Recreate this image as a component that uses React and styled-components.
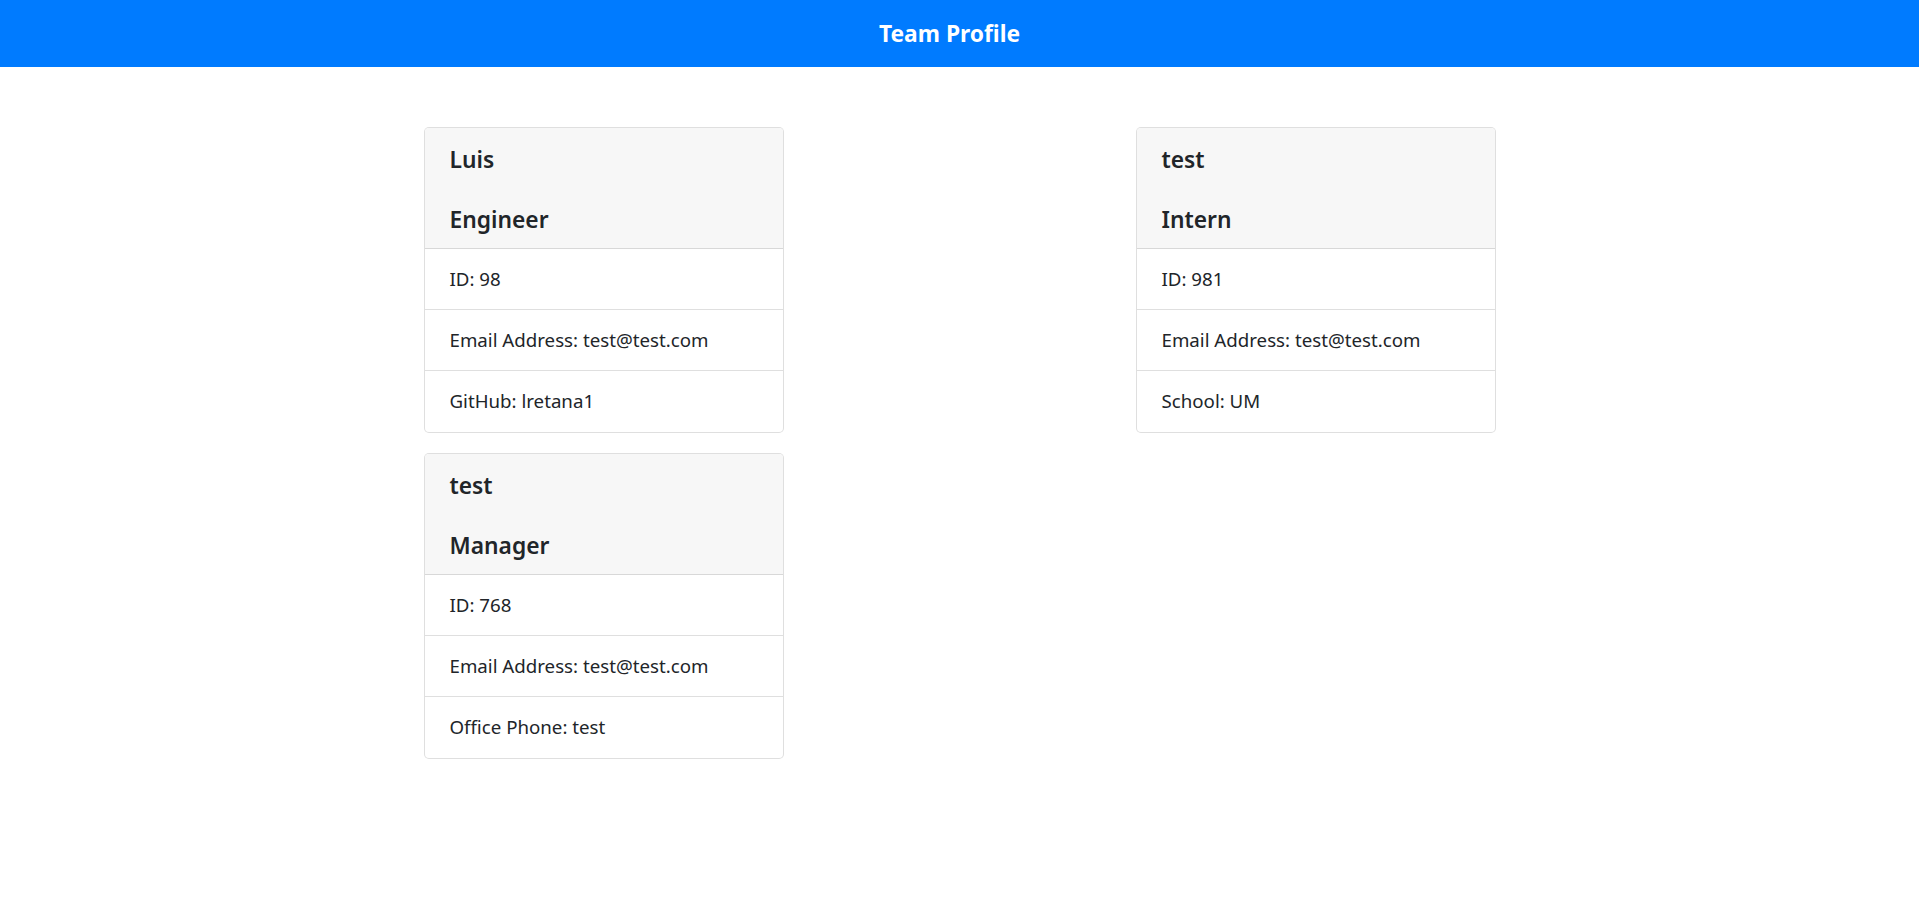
import styled, { createGlobalStyle } from "styled-components";

const team = [
  {
    name: "Luis",
    role: "Engineer",
    id: 98,
    email: "test@test.com",
    extra: "GitHub: lretana1",
  },
  {
    name: "test",
    role: "Manager",
    id: 768,
    email: "test@test.com",
    extra: "Office Phone: test",
  },
  {
    name: "test",
    role: "Intern",
    id: 981,
    email: "test@test.com",
    extra: "School: UM",
  },
];

function EmployeeCard({ member }) {
  return (
    <Card>
      <CardHeader>
        <Name>{member.name}</Name>
        <Role>{member.role}</Role>
      </CardHeader>
      <ListGroup>
        <ListItem>ID: {member.id}</ListItem>
        <ListItem>Email Address: {member.email}</ListItem>
        <ListItem>{member.extra}</ListItem>
      </ListGroup>
    </Card>
  );
}

function App() {
  const left = team.filter((m) => m.role !== "Intern");
  const right = team.filter((m) => m.role === "Intern");

  return (
    <>
      <GlobalStyle />
      <TopBar>
        <Title>Team Profile</Title>
      </TopBar>
      <Board>
        <Column>
          {left.map((m) => (
            <EmployeeCard key={m.id} member={m} />
          ))}
        </Column>
        <Column>
          {right.map((m) => (
            <EmployeeCard key={m.id} member={m} />
          ))}
        </Column>
      </Board>
    </>
  );
}

export default App;

const GlobalStyle = createGlobalStyle`
  body {
    margin: 0;
    background: #fff;
    color: #212529;
    font-family: "Noto Sans", "Open Sans", sans-serif;
  }
`;

const TopBar = styled.header`
  display: flex;
  justify-content: center;
  align-items: center;
  height: 67px;
  background-color: #007bff;
  padding-right: 20px;
`;

const Title = styled.h1`
  margin: 0;
  font-size: 22.8px;
  font-weight: 700;
  color: #fff;
`;

const Board = styled.main`
  display: grid;
  grid-template-columns: 360px 360px;
  justify-content: center;
  column-gap: 352px;
  padding-top: 60px;
`;

const Column = styled.div`
  display: flex;
  flex-direction: column;
  gap: 20px;
`;

const Card = styled.section`
  border: 1px solid rgba(0, 0, 0, 0.125);
  border-radius: 5px;
  overflow: hidden;
  background: #fff;
`;

const CardHeader = styled.div`
  padding: 17px 25px 13px;
  background-color: #f7f7f7;
  border-bottom: 1px solid rgba(0, 0, 0, 0.125);
`;

const Name = styled.h5`
  margin: 0 0 30px;
  font-size: 22.8px;
  line-height: 30px;
  font-weight: 600;
`;

const Role = styled.h5`
  margin: 0;
  font-size: 22.8px;
  line-height: 30px;
  font-weight: 600;
`;

const ListGroup = styled.ul`
  list-style: none;
  margin: 0;
  padding: 0;
`;

const ListItem = styled.li`
  padding: 15px 25px;
  font-size: 18.7px;
  line-height: 30px;
  border-bottom: 1px solid rgba(0, 0, 0, 0.125);

  &:last-child {
    padding-bottom: 16px;
    border-bottom: none;
  }
`;
